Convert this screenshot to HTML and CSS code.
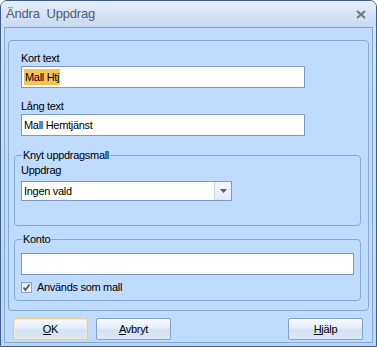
FILE: index.html
```html
<!DOCTYPE html>
<html lang="sv">
<head>
<meta charset="utf-8">
<title>Ändra Uppdrag</title>
<link rel="stylesheet" href="styles.css">
</head>
<body>
<div class="window">
  <div class="titlebar">
    <span class="title">Ändra&nbsp; Uppdrag</span>
    <svg class="close" width="10" height="9" viewBox="0 0 10 9"><path d="M1 1 L9 8 M9 1 L1 8" stroke="#6f7b8b" stroke-width="2.2" fill="none"/></svg>
  </div>
  <div class="client">
    <div class="panel">
      <div class="lbl">Kort text</div>
      <div class="input"><span class="sel">Mall Htj</span></div>
      <div class="lbl lbl-gap">Lång text</div>
      <div class="input">Mall Hemtjänst</div>
      <fieldset class="group group-tmpl">
        <legend>Knyt uppdragsmall</legend>
        <div class="lbl lbl-in">Uppdrag</div>
        <div class="combo">
          <span class="combo-text">Ingen vald</span>
          <span class="combo-btn"><svg width="7" height="4" viewBox="0 0 7 4"><path d="M0 0 H7 L3.5 4 Z" fill="#4d5f80"/></svg></span>
        </div>
      </fieldset>
      <fieldset class="group group-konto">
        <legend>Konto</legend>
        <div class="input input-wide"></div>
        <div class="check">
          <span class="box"><svg width="9" height="9" viewBox="0 0 9 9"><path d="M1.5 4.5 L3.5 7 L7.5 1.5" stroke="#4a5872" stroke-width="1.8" fill="none"/></svg></span>
          <span>Används som mall</span>
        </div>
      </fieldset>
    </div>
    <div class="buttons">
      <button class="btn btn-default"><u>O</u>K</button>
      <button class="btn"><u>A</u>vbryt</button>
      <button class="btn btn-help"><u>H</u>jälp</button>
    </div>
  </div>
</div>
</body>
</html>
```

FILE: styles.css
```css
* { box-sizing: border-box; }
html, body { margin: 0; padding: 0; }
body {
  font-family: "Liberation Sans", Arial, sans-serif;
  font-size: 11px;
  letter-spacing: -0.3px;
  color: #000;
  background: #ffffff;
}
.window {
  width: 377px;
  height: 347px;
  border: 1px solid #3d5d88;
  border-radius: 7px 7px 0 0;
  background: linear-gradient(#d4e4f8, #bcd5f4);
  display: flex;
  flex-direction: column;
  overflow: hidden;
}
.titlebar {
  height: 26px;
  flex: none;
  display: flex;
  align-items: center;
  justify-content: space-between;
  padding: 0 10px 1px 5px;
  background: linear-gradient(#e6eefa, #d6e4f6 50%, #c8daf2);
}
.title {
  font-size: 13px;
  letter-spacing: -0.2px;
  color: #4f5d70;
}
.close { display: block; margin-top: 1px; }
.client {
  flex: 1;
  margin: 0 3px 3px;
  border: 1px solid #86a6d2;
  background: #bfdbff;
  display: flex;
  flex-direction: column;
}
.panel {
  margin: 12px 3px 0;
  height: 271px;
  border: 1px solid #88a8d4;
  border-radius: 4px;
  padding: 11px 0 0 12px;
}
.lbl {
  line-height: 13px;
  height: 13px;
  margin-bottom: 1px;
}
.lbl-gap { margin-top: 12px; }
.input {
  width: 284px;
  height: 22px;
  background: #fff;
  border: 1px solid #7b99c5;
  padding: 2px 0 0 2px;
  line-height: 16px;
}
.sel {
  display: inline-block;
  background: #f6c35a;
  padding: 0 1px;
  line-height: 16px;
}
.group {
  margin: 13px 0 0 -7px;
  width: 347px;
  padding: 0 0 0 6px;
  border: 1px solid #87a6d2;
  border-radius: 4px;
  min-inline-size: 0;
}
.group legend {
  padding: 0 1px;
  margin-left: 1px;
  line-height: 13px;
}
.group-tmpl { padding-bottom: 24px; }
.lbl-in { margin-top: 2px; }
.combo {
  margin-top: 4px;
  width: 211px;
  height: 20px;
  background: #fff;
  border: 1px solid #7b99c5;
  display: flex;
}
.combo-text {
  flex: 1;
  padding: 2px 0 0 2px;
  line-height: 15px;
}
.combo-btn {
  width: 17px;
  border-left: 1px solid #c8d6ea;
  background: linear-gradient(#f4f8fd, #e1ebf8);
  display: flex;
  align-items: center;
  justify-content: center;
}
.combo-btn svg { display: block; }
.group-konto {
  margin-top: 7px;
  padding-bottom: 6px;
}
.input-wide {
  margin-top: 7px;
  width: 333px;
}
.check {
  margin-top: 6px;
  height: 13px;
  line-height: 13px;
  display: flex;
  align-items: center;
  gap: 5px;
}
.box {
  width: 11px;
  height: 11px;
  border: 1px solid #8da2bf;
  background: linear-gradient(#e4e9ef, #ffffff);
  display: flex;
  align-items: center;
  justify-content: center;
  margin-left: 0;
}
.box svg { display: block; }
.buttons {
  display: flex;
  gap: 8px;
  padding: 0 9px 0 8px;
  margin-top: 7px;
}
.btn {
  width: 75px;
  height: 22px;
  font-family: "Liberation Sans", Arial, sans-serif;
  font-size: 11px;
  letter-spacing: -0.3px;
  color: #000;
  border: 1px solid #859fc6;
  border-radius: 2px;
  background: linear-gradient(#f7fafe, #e4edf9 45%, #d2e1f4 55%, #dbe8f8);
  padding: 0;
  margin: 0;
}
.btn u { text-underline-offset: 1px; }
.btn-default {
  border-color: #e2cf8f;
  box-shadow: inset 0 0 0 1px #f6ecc6;
}
.btn-help { margin-left: auto; }
```
